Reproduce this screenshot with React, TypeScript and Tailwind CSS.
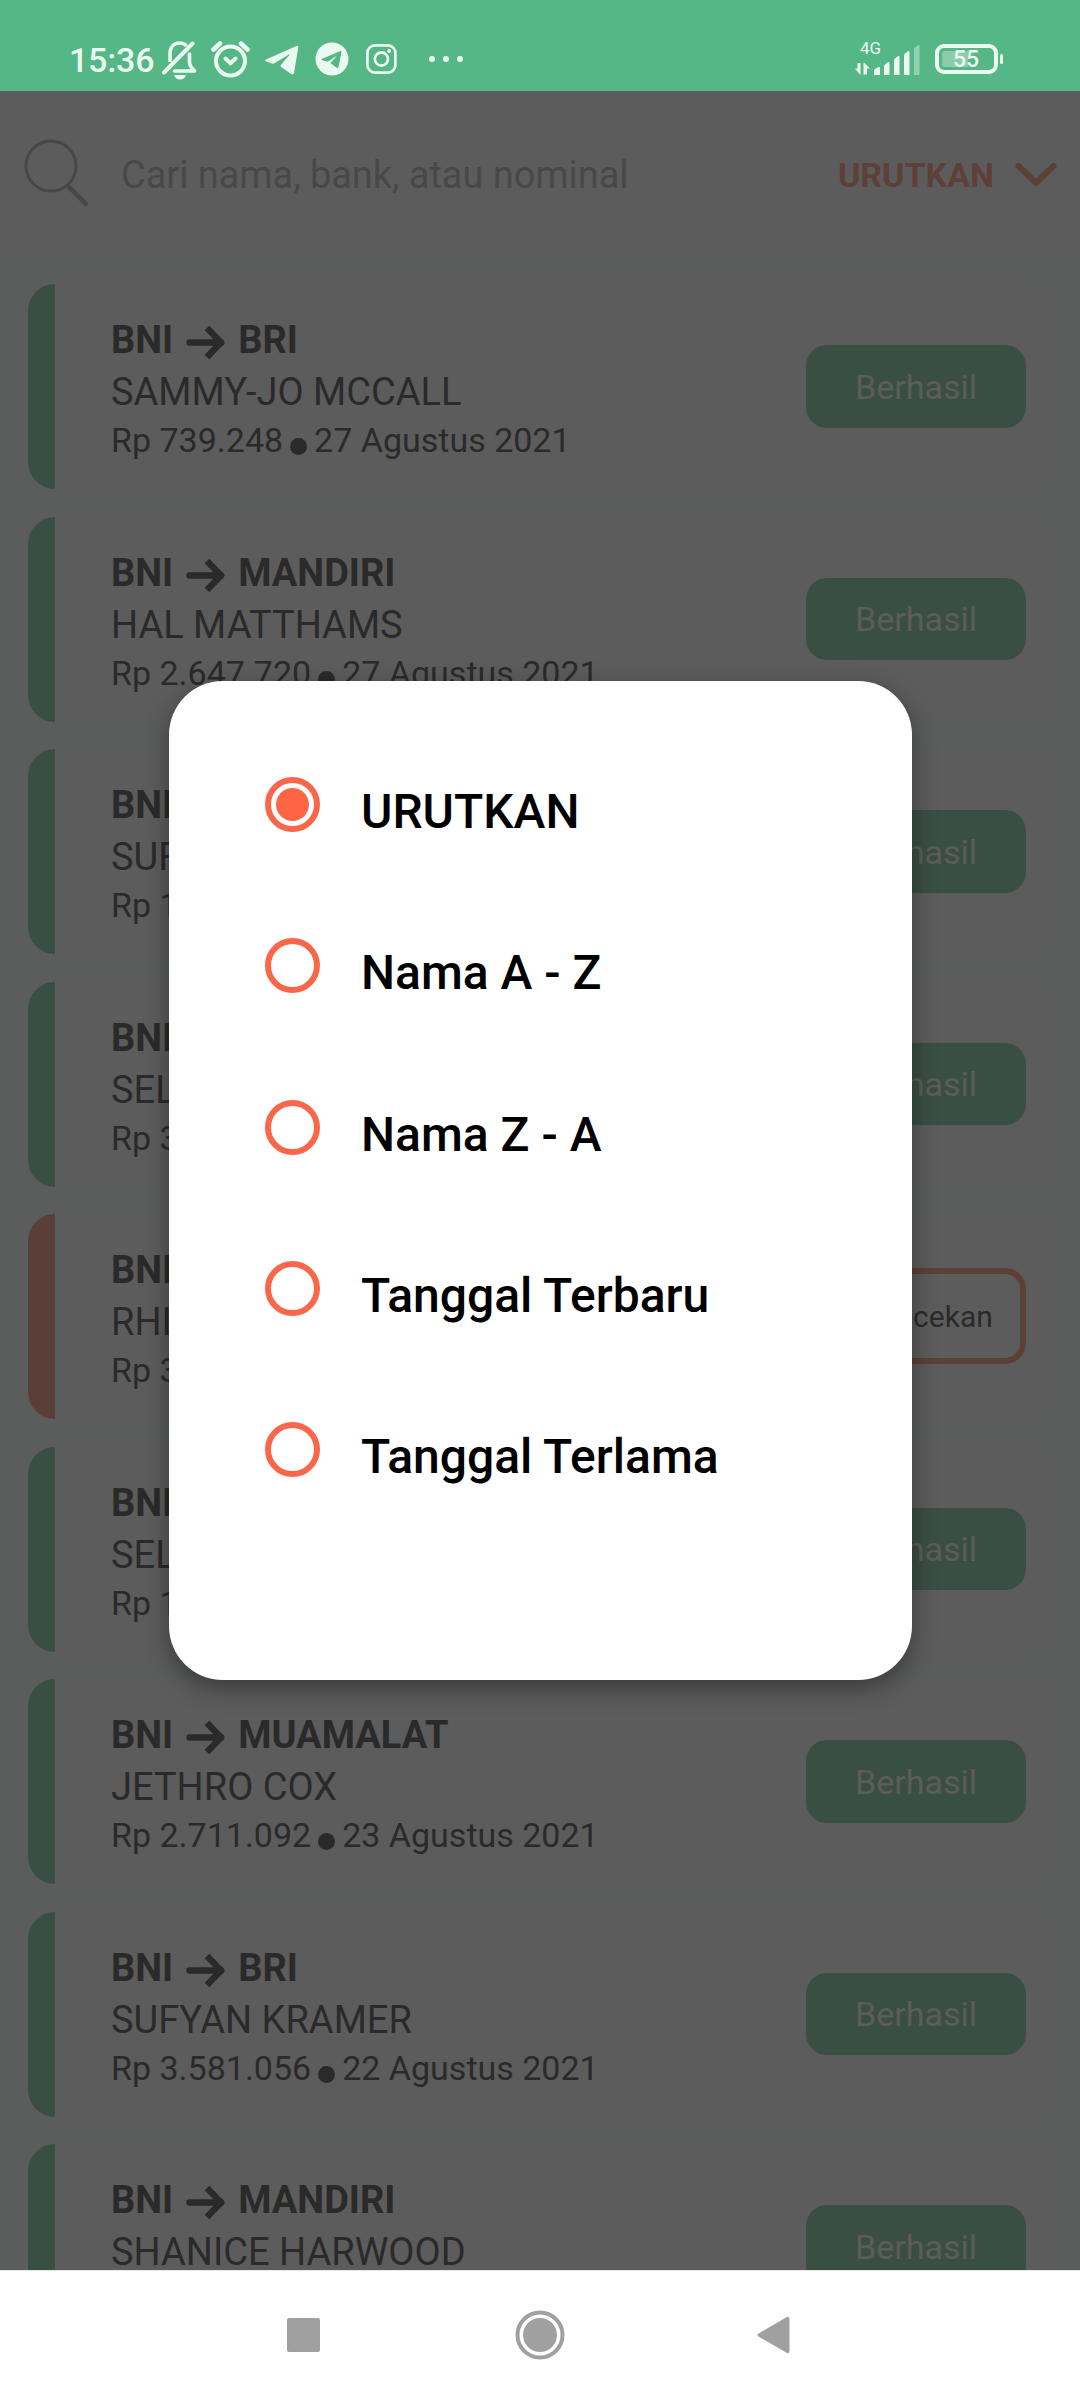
import React from "react";

type Tx = {
  bank: string;
  name: string;
  amount: string;
  date: string;
  pending?: boolean;
};

const transactions: Tx[] = [
  { bank: "BRI", name: "SAMMY-JO MCCALL", amount: "Rp 739.248", date: "27 Agustus 2021" },
  { bank: "MANDIRI", name: "HAL MATTHAMS", amount: "Rp 2.647.720", date: "27 Agustus 2021" },
  { bank: "BRI", name: "SUFYAN KRAMER", amount: "Rp 1.581.056", date: "26 Agustus 2021" },
  { bank: "BCA", name: "SELINA HALL", amount: "Rp 3.581.056", date: "25 Agustus 2021" },
  { bank: "BCA", name: "RHIANNA COX", amount: "Rp 3.581.056", date: "25 Agustus 2021", pending: true },
  { bank: "BRI", name: "SELINA HALL", amount: "Rp 1.581.056", date: "24 Agustus 2021" },
  { bank: "MUAMALAT", name: "JETHRO COX", amount: "Rp 2.711.092", date: "23 Agustus 2021" },
  { bank: "BRI", name: "SUFYAN KRAMER", amount: "Rp 3.581.056", date: "22 Agustus 2021" },
  { bank: "MANDIRI", name: "SHANICE HARWOOD", amount: "Rp 1.204.310", date: "21 Agustus 2021" },
];

const options = ["URUTKAN", "Nama A - Z", "Nama Z - A", "Tanggal Terbaru", "Tanggal Terlama"];

function StatusBar() {
  return (
    <header className="flex h-[91px] shrink-0 items-start bg-[#54b785] text-[#eafaf1]">
      <span className="mt-[40px] ml-[69px] w-[93px] text-[34px] leading-[40px] font-medium tracking-[-0.2px] whitespace-nowrap">
        15:36
      </span>
      <svg className="mt-[41px] h-[39px] w-[35px]" viewBox="0 0 35 39" fill="none" stroke="currentColor" strokeWidth="3.6">
        <path d="M8 21V13c0-7 4-11 9.500-11c3 0 5.500 1 7 3" />
        <path d="M2 31.500L30.500 2.500" strokeWidth="4" strokeLinecap="round" />
        <path d="M27.500 13v8.500c0 3 1.500 5 5 8.500H12.500" strokeLinejoin="round" strokeLinecap="round" />
        <path d="M12 34h12c-1 3-3 4.500-6 4.500s-5-1.500-6-4.500z" fill="currentColor" stroke="none" />
      </svg>
      <svg className="mt-[41px] ml-[14px] h-[37px] w-[39px]" viewBox="0 0 39 37" fill="none" stroke="currentColor">
        <circle cx="19.500" cy="20" r="14.500" strokeWidth="4" />
        <path d="M2.500 8.500L9 2.500M36.500 8.500L30 2.500" strokeWidth="4.600" strokeLinecap="round" />
        <path d="M14.500 17.500l5 4.800 5-4.800" strokeWidth="4" strokeLinecap="round" strokeLinejoin="round" />
      </svg>
      <svg className="mt-[45px] ml-[15px] h-[30px] w-[34px]" viewBox="0 0 34 30" fill="currentColor">
        <path d="M1 14.500L31.500 1c1.300-.5 2 .3 1.800 1.500l-4.300 25.500c-.3 1.500-1.500 1.800-2.800 1l-10-7c-1-.7-1-1.500-.2-2.300L24 10.500c.8-1-.2-1.200-1-.6L9.500 18.300c-.8.5-1.500.5-2.400.2L1 16.500c-1.200-.5-1.200-1.500 0-2z" />
      </svg>
      <svg className="mt-[42px] ml-[16px] h-[34px] w-[34px]" viewBox="0 0 34 34">
        <circle cx="17" cy="17" r="16.500" fill="currentColor" />
        <path d="M6.500 17L25.500 9c.8-.2 1.100.2 1 1l-3 15c-.2 1-.9 1.200-1.700.7l-6.300-4.500L22 13.500l-9.300 6.200-5.900-1.700c-.8-.3-.8-.7-.3-1z" fill="#54b785" />
      </svg>
      <svg className="mt-[44px] ml-[17px] h-[30px] w-[31px]" viewBox="0 0 31 30" fill="none" stroke="currentColor" strokeWidth="2.700">
        <rect x="1.400" y="1.400" width="28" height="27.200" rx="7.500" />
        <circle cx="15.400" cy="15" r="6.600" />
        <circle cx="23.200" cy="7" r="1.900" fill="currentColor" stroke="none" />
      </svg>
      <div className="mt-[56px] ml-[32px] flex gap-2">
        <i className="size-[6px] rounded-full bg-current" />
        <i className="size-[6px] rounded-full bg-current" />
        <i className="size-[6px] rounded-full bg-current" />
      </div>
      <div className="mt-[40px] mr-[13px] ml-auto flex h-[36px] w-[68px] flex-col">
        <span className="ml-[6px] h-[17px] text-[17px] leading-[17px]">4G</span>
        <svg className="-mt-[17px] h-[36px] w-[68px] shrink-0" viewBox="0 0 68 36" fill="currentColor">
          <path d="M1 28.500h2.500V23h3v11.500H6zM9.500 34.500V23h1l5.500 5.500h-3v6z" />
          <path d="M20 35v-4.500q0-1 1-1.500l3.500-2q1.500-.5 1.500 1V35z" />
          <path d="M30 35V26q0-1 1-1.500l3-2.500q1.500-.5 1.500 1V35z" />
          <path d="M40 35V20q0-1 1-1.500l3-2.500q1.500-.5 1.500 1V35z" />
          <path d="M50 35V15q0-1 1-1.500l3-2.500q1.500-.5 1.500 1V35z" />
          <path d="M60 35V9q0-1 1-1.500l3-2.500q1.500-.5 1.500 1V35z" opacity=".4" />
        </svg>
      </div>
      <div className="mt-[44px] flex h-[30px] w-[63px] items-center rounded-[9px] border-4 border-[#eafaf1] p-[3px]">
        <div className="h-full w-[26px] shrink-0 rounded-l-[3px] bg-[#8bcdab]" />
        <span className="-ml-[15px] pt-[2px] text-[23px] leading-[24px] font-medium">55</span>
      </div>
      <i className="mt-[54px] mr-[77px] ml-[2px] h-[10px] w-[3px] rounded-full bg-current" />
    </header>
  );
}

function SearchBar() {
  return (
    <div className="flex h-[165px] shrink-0 items-start bg-[#5c5c5c]">
      <svg className="mt-[47px] ml-[24px] h-[69px] w-[66px]" viewBox="0 0 66 69" fill="none" stroke="#474747" strokeLinecap="round">
        <ellipse cx="27" cy="28" rx="25" ry="25" strokeWidth="2.800" />
        <path d="M44 48L62 66" strokeWidth="4.500" />
      </svg>
      <span className="mt-[60px] ml-[31px] text-[38px] leading-[48px] tracking-[-0.05px] whitespace-nowrap text-[#484848]">
        Cari nama, bank, atau nominal
      </span>
      <span className="mt-[60px] mr-[21px] ml-auto text-[34px] leading-[48px] font-bold text-[#5d4038]">URUTKAN</span>
      <svg className="mt-[71px] mr-[23px] h-[26px] w-[42px]" viewBox="0 0 42 26" fill="none" stroke="#5d4038" strokeWidth="6" strokeLinecap="round" strokeLinejoin="round">
        <path d="M3.500 4L21 21 38.500 4" />
      </svg>
    </div>
  );
}

function Card({ tx }: { tx: Tx }) {
  return (
    <article className="flex h-[205px] shrink-0 items-start overflow-hidden rounded-[27px] bg-[#5c5c5c] text-[#2a2a2a]">
      <div className={tx.pending ? "h-full w-[27px] bg-[#5a3f38]" : "h-full w-[27px] bg-[#3a4f43]"} />
      <div className="mt-[30px] ml-[56px] whitespace-nowrap">
        <div className="flex h-[52px] items-start text-[38px] leading-[52px] font-bold">
          BNI
          <svg className="mr-[13px] ml-[13px] mt-[10px] h-[36px] w-[39px]" viewBox="0 0 39 36" fill="none" stroke="currentColor" strokeWidth="6.500">
            <path d="M3.500 18.500H35" strokeLinecap="round" />
            <path d="M21 4L35 18.500 21 33" strokeLinejoin="round" />
          </svg>
          {tx.bank}
        </div>
        <div className="h-[51px] text-[38px] leading-[52px]">{tx.name}</div>
        <div className="flex h-[46px] items-start text-[34px] leading-[46px]">
          {tx.amount}
          <i className="mx-[7px] mt-[21px] size-[17px] rounded-full bg-current" />
          {tx.date}
        </div>
      </div>
      {tx.pending ? (
        <div className="mt-[54px] mr-[27px] ml-auto flex h-[96px] w-[220px] items-center justify-center rounded-[21px] border-[6px] border-[#5d4038] pr-[10px] text-[30px]">
          Pengecekan
        </div>
      ) : (
        <div className="mt-[61px] mr-[27px] ml-auto flex h-[82.5px] w-[220px] items-center justify-center rounded-[21px] bg-[#3a4f43] pt-[2px] text-[34px] text-[#5c5c5c]">
          Berhasil
        </div>
      )}
    </article>
  );
}

function SortDialog() {
  return (
    <div
      role="dialog"
      className="absolute top-[681px] left-[169px] flex h-[999px] w-[743px] flex-col rounded-[54px] bg-white pt-[96px] pl-[96px] shadow-[0_8px_24px_rgba(0,0,0,0.38)]"
    >
      {options.map((label, i) => (
        <div key={label} className="flex h-[161.3px] items-start">
          <span className="flex size-[55px] items-center justify-center rounded-full border-[6px] border-[#f9674a]">
            {i === 0 && <i className="size-[33px] rounded-full bg-[#fd6545]" />}
          </span>
          <span className="mt-[5px] ml-[41px] text-[48px] leading-[60px] font-medium whitespace-nowrap text-black">{label}</span>
        </div>
      ))}
    </div>
  );
}

function NavBar() {
  return (
    <nav className="flex h-[130px] shrink-0 items-start border-t border-[#e8e8e8] bg-white text-[#a0a0a0]">
      <i className="mt-[47px] ml-[287px] h-[34px] w-[33px] rounded-[2px] bg-current" />
      <svg className="mt-[39px] ml-[195px] size-[50px]" viewBox="0 0 50 50">
        <circle cx="25" cy="25" r="22.500" fill="none" stroke="currentColor" strokeWidth="4" />
        <circle cx="25" cy="25" r="17" fill="currentColor" />
      </svg>
      <svg className="mt-[45px] ml-[192px] h-[38px] w-[33px]" viewBox="0 0 33 38" fill="currentColor">
        <path d="M1.500 17.500L29.500 1.200Q32.500 0 32.500 3V35Q32.500 38 29.500 36.800L1.500 20.500Q-.5 19 1.500 17.500z" />
      </svg>
    </nav>
  );
}

export default function App() {
  return (
    <div className="relative flex h-[2400px] w-[1080px] flex-col overflow-hidden bg-[#5a5d5b] font-[Roboto,sans-serif]">
      <StatusBar />
      <SearchBar />
      <main className="flex min-h-0 flex-1 flex-col gap-[27.5px] overflow-hidden pt-7 pr-[27px] pl-[28px]">
        {transactions.map((tx, i) => (
          <Card key={i} tx={tx} />
        ))}
      </main>
      <NavBar />
      <SortDialog />
    </div>
  );
}
